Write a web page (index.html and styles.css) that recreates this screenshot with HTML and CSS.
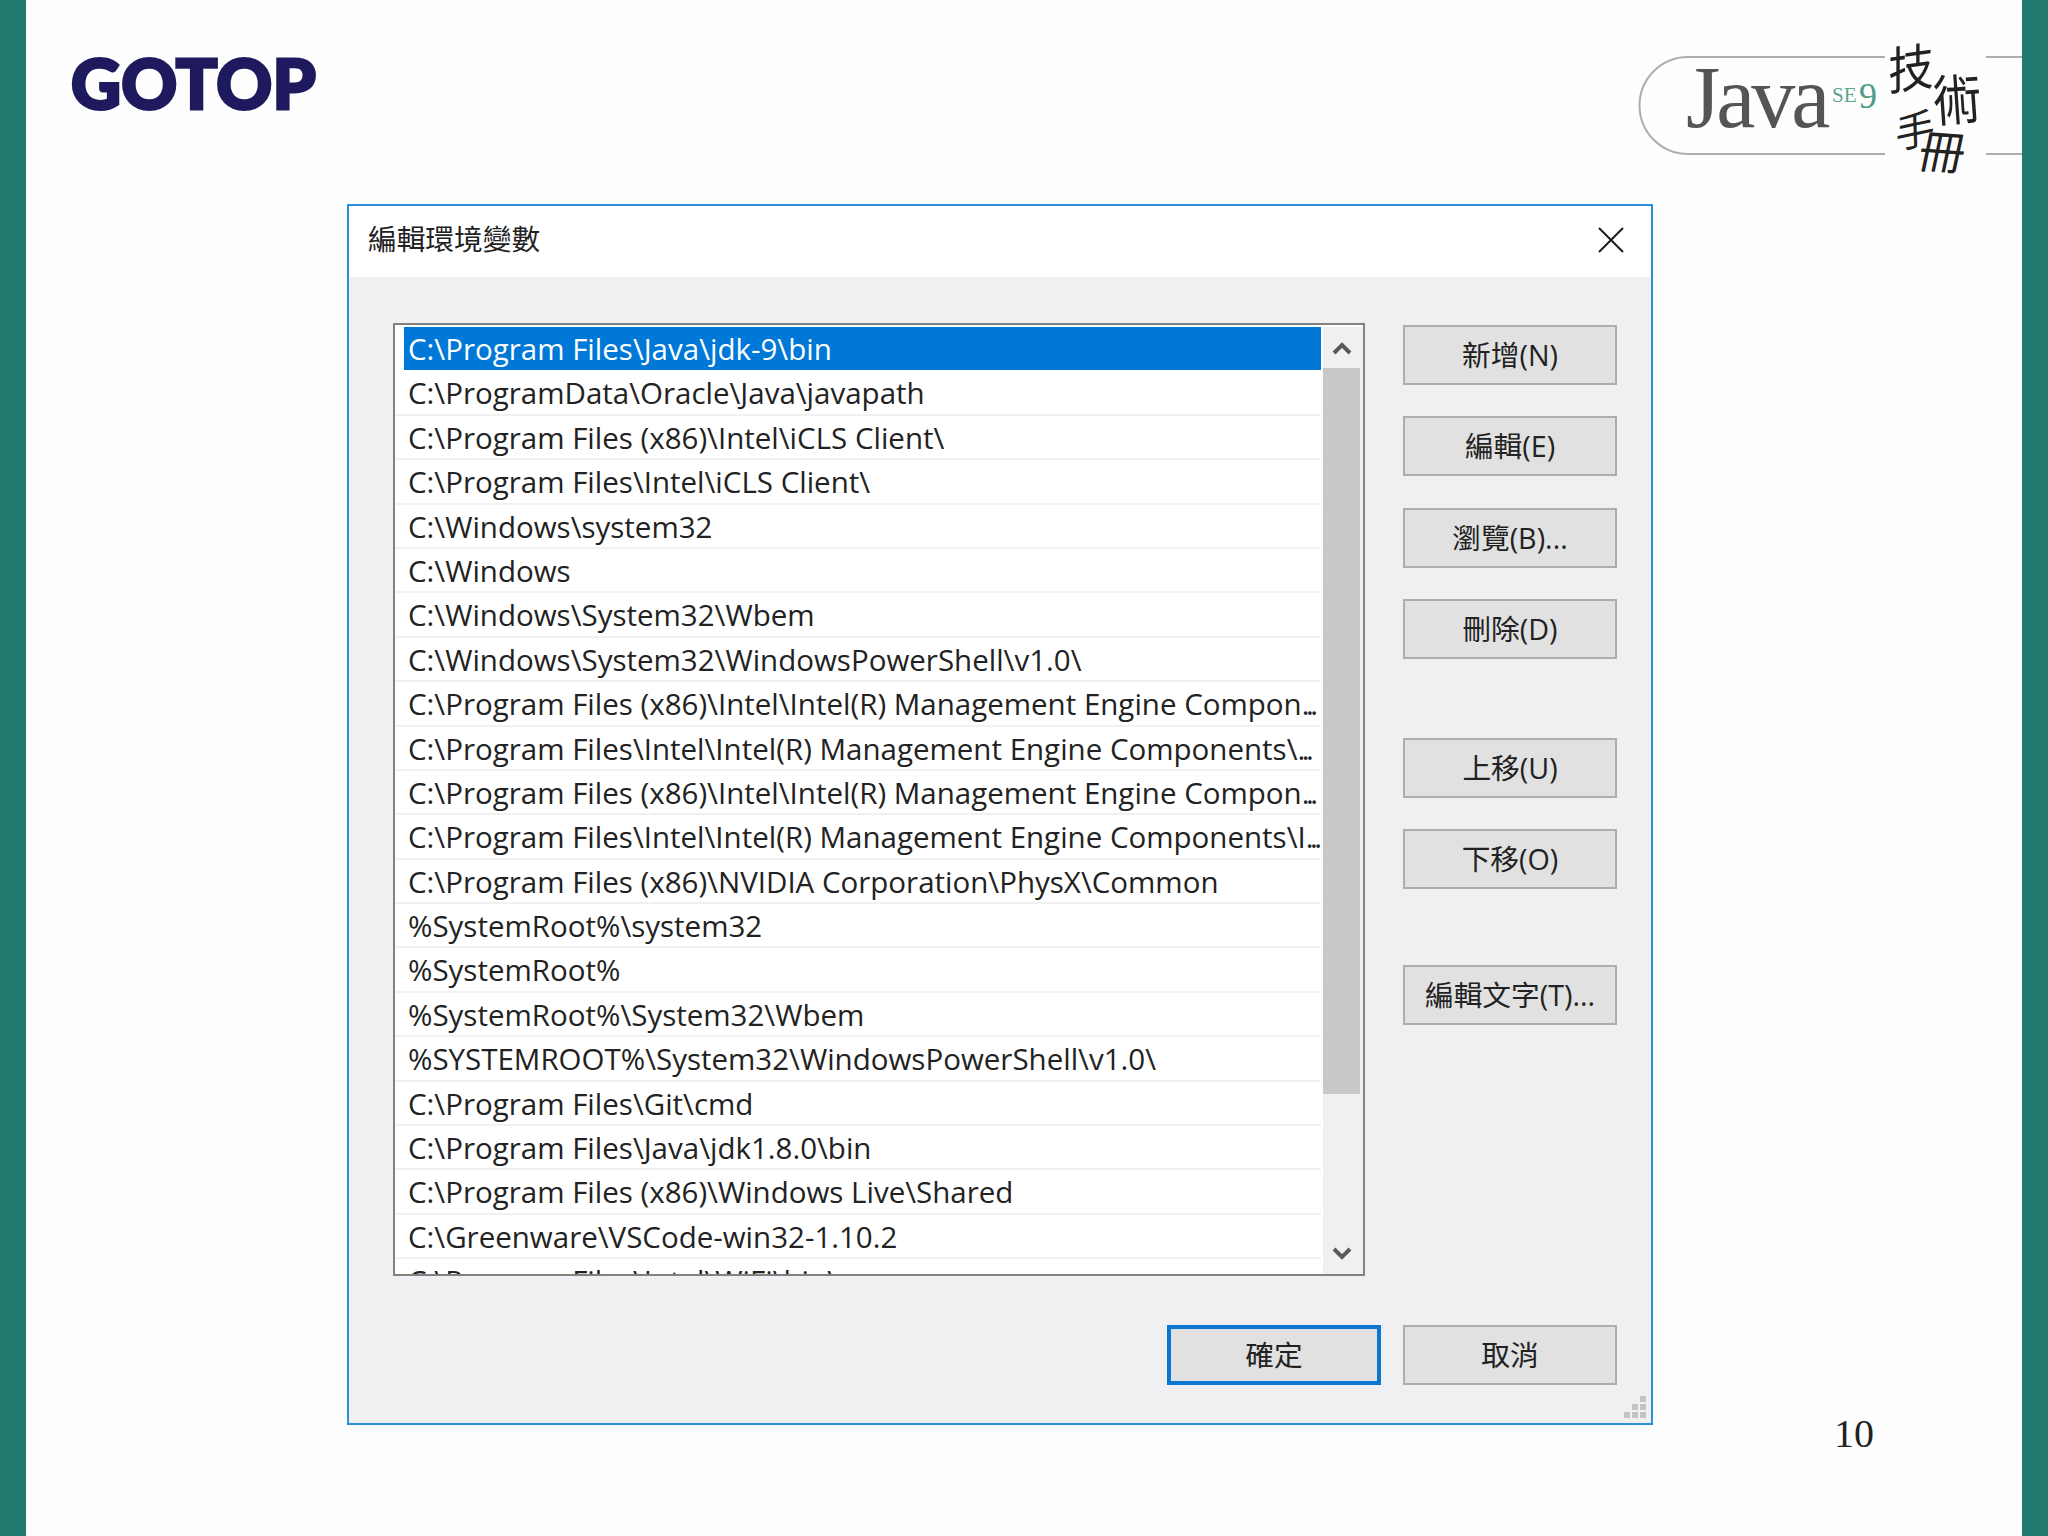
FILE: index.html
```html
<!DOCTYPE html>
<html lang="zh-Hant">
<head>
<meta charset="utf-8">
<title>編輯環境變數</title>
<link rel="stylesheet" href="styles.css">
</head>
<body>
<div class="slide">
  <div class="bar"></div>
  <div class="content">
    <header class="header">
      <div class="gotop">GOTOP</div>
      <div class="java-logo">
        <svg class="pill" width="384" height="100" viewBox="0 0 384 100" aria-hidden="true">
          <path d="M247 1H50A48.500 48.500 0 0 0 50 98H247M348 1H384M348 98H384" fill="none" stroke="#adadad" stroke-width="2"/>
        </svg>
        <span class="java-word">Java</span>
        <span class="java-se">SE</span>
        <span class="java-nine">9</span>
        <span class="hand hand-1">技</span>
        <span class="hand hand-2">術</span>
        <span class="hand hand-3">手</span>
        <span class="hand hand-4">冊</span>
      </div>
    </header>
    <main class="stage">
      <section class="dialog">
        <div class="titlebar">
          <span class="title">編輯環境變數</span>
          <svg class="close" width="26" height="26" viewBox="0 0 26 26" aria-hidden="true">
            <path d="M1 1L25 25M25 1L1 25" stroke="#1a1a1a" stroke-width="2" fill="none"/>
          </svg>
        </div>
        <div class="dialog-body">
          <div class="main-row">
            <div class="listbox">
              <div class="rows">
                <div class="row selected">C:\Program Files\Java\jdk-9\bin</div>
                <div class="row">C:\ProgramData\Oracle\Java\javapath</div>
                <div class="row">C:\Program Files (x86)\Intel\iCLS Client\</div>
                <div class="row">C:\Program Files\Intel\iCLS Client\</div>
                <div class="row">C:\Windows\system32</div>
                <div class="row">C:\Windows</div>
                <div class="row">C:\Windows\System32\Wbem</div>
                <div class="row">C:\Windows\System32\WindowsPowerShell\v1.0\</div>
                <div class="row">C:\Program Files (x86)\Intel\Intel(R) Management Engine Compon<span class="dots">...</span></div>
                <div class="row">C:\Program Files\Intel\Intel(R) Management Engine Components\<span class="dots">...</span></div>
                <div class="row">C:\Program Files (x86)\Intel\Intel(R) Management Engine Compon<span class="dots">...</span></div>
                <div class="row">C:\Program Files\Intel\Intel(R) Management Engine Components\I<span class="dots">...</span></div>
                <div class="row">C:\Program Files (x86)\NVIDIA Corporation\PhysX\Common</div>
                <div class="row">%SystemRoot%\system32</div>
                <div class="row">%SystemRoot%</div>
                <div class="row">%SystemRoot%\System32\Wbem</div>
                <div class="row">%SYSTEMROOT%\System32\WindowsPowerShell\v1.0\</div>
                <div class="row">C:\Program Files\Git\cmd</div>
                <div class="row">C:\Program Files\Java\jdk1.8.0\bin</div>
                <div class="row">C:\Program Files (x86)\Windows Live\Shared</div>
                <div class="row">C:\Greenware\VSCode-win32-1.10.2</div>
                <div class="row">C:\Program Files\Intel\WiFi\bin\</div>
              </div>
              <div class="scrollbar">
                <div class="arrow">
                  <svg width="20" height="14" viewBox="0 0 20 14" aria-hidden="true"><path d="M2 12L10 4L18 12" fill="none" stroke="#5a5a5a" stroke-width="4"/></svg>
                </div>
                <div class="thumb"></div>
                <div class="track"></div>
                <div class="arrow">
                  <svg width="20" height="14" viewBox="0 0 20 14" aria-hidden="true"><path d="M2 2L10 10L18 2" fill="none" stroke="#5a5a5a" stroke-width="4"/></svg>
                </div>
              </div>
            </div>
            <div class="actions">
              <button class="btn">新增(N)</button>
              <button class="btn">編輯(E)</button>
              <button class="btn">瀏覽(B)...</button>
              <button class="btn">刪除(D)</button>
              <button class="btn group-start">上移(U)</button>
              <button class="btn">下移(O)</button>
              <button class="btn group-start-2">編輯文字(T)...</button>
            </div>
          </div>
          <div class="footer">
            <button class="btn default">確定</button>
            <button class="btn">取消</button>
          </div>
          <svg class="grip" width="22" height="22" viewBox="0 0 22 22" aria-hidden="true">
            <path d="M16 0h6v6h-6zM8 8h6v6H8zM16 8h6v6h-6zM0 16h6v6H0zM8 16h6v6H8zM16 16h6v6h-6z" fill="#c4c4c4"/>
          </svg>
        </div>
      </section>
    </main>
    <div class="page-number">10</div>
  </div>
  <div class="bar"></div>
</div>
</body>
</html>
```

FILE: styles.css
```css
* { box-sizing: border-box; }
html, body { margin: 0; padding: 0; background: #fff; }
.slide { display: flex; width: 2048px; height: 1536px; overflow: hidden; background: #fefefe; }
.bar { width: 26px; flex: none; background: #217a6d; }
.content { flex: 1; display: flex; flex-direction: column; min-width: 0; }

.header { height: 204px; flex: none; display: flex; justify-content: space-between; align-items: flex-start; padding-left: 45px; }
.gotop { margin-top: 41px; font: 900 69px/84px Lato, sans-serif; color: #1f1a5e; -webkit-text-stroke: 3px #1f1a5e; letter-spacing: 0.2px; }
.java-logo { position: relative; width: 384px; height: 204px; font-family: "Liberation Serif", serif; }
.pill { position: absolute; left: 0; top: 56px; }
.java-word { position: absolute; left: 48px; top: 48px; font-size: 88px; line-height: 100px; color: #555; letter-spacing: -4px; }
.java-se { position: absolute; left: 194px; top: 83px; font-size: 21px; line-height: 24px; color: #5fa68f; }
.java-nine { position: absolute; left: 221px; top: 78px; font-size: 36px; line-height: 36px; color: #4d9c84; }
.hand { position: absolute; font-family: "Noto Sans CJK TC", sans-serif; font-weight: 400; color: #222; line-height: 1; }
.hand-1 { left: 250px; top: 42px; font-size: 46px; transform: rotate(-8deg) skewX(-8deg) scaleY(1.1); }
.hand-2 { left: 295px; top: 72px; font-size: 48px; transform: rotate(-4deg) scaleY(1.15); }
.hand-3 { left: 257px; top: 108px; font-size: 40px; transform: rotate(-12deg) skewX(-10deg); }
.hand-4 { left: 282px; top: 126px; font-size: 46px; transform: rotate(4deg) skewX(-8deg); }

.stage { flex: none; padding-left: 321px; }
.dialog { width: 1306px; height: 1221px; display: flex; flex-direction: column; border: 2px solid #2a8fd8; background: #f0f0f2; font-family: "Open Sans", "Noto Sans CJK TC", sans-serif; color: #222; }
.titlebar { height: 71px; flex: none; display: flex; align-items: center; justify-content: space-between; padding: 0 27px 4px 19px; background: #fff; }
.title { margin-bottom: 4px; font: 28.7px/40px "Noto Sans CJK TC", sans-serif; color: #222; }
.dialog-body { flex: 1; position: relative; display: flex; flex-direction: column; padding: 46px 34px 0 44px; }
.main-row { display: flex; gap: 38px; align-items: flex-start; }

.listbox { width: 972px; height: 953px; flex: none; display: flex; border: 2px solid #828282; background: #fff; overflow: hidden; }
.rows { width: 926px; flex: none; padding-top: 2px; overflow: hidden; }
.row { height: 44.4px; line-height: 43px; padding-left: 13px; font-size: 29.5px; white-space: nowrap; overflow: hidden; border-bottom: 2px solid #f1f1f1; color: #222; }
.row.selected { margin-left: 9px; padding-left: 4px; background: #0078d7; color: #fff; height: 43px; margin-bottom: 1.4px; border-bottom: 0; }
.dots { letter-spacing: -3.5px; }
.scrollbar { width: 40px; flex: none; margin-left: 2px; padding-right: 3px; display: flex; flex-direction: column; background: #f0f0f0; margin-top: 2px; }
.arrow { height: 41px; flex: none; display: flex; align-items: center; justify-content: center; }
.thumb { height: 726px; flex: none; background: #c8c8c8; }
.track { flex: 1; }

.actions { width: 214px; flex: none; display: flex; flex-direction: column; gap: 31.4px; padding-top: 2px; }
.btn { display: flex; align-items: center; justify-content: center; width: 214px; height: 60px; padding: 0; border: 2px solid #adadad; background: #e1e1e1; font: 28.7px/40px "Open Sans", "Noto Sans CJK TC", sans-serif; color: #222; }
.group-start { margin-top: 47px; }
.group-start-2 { margin-top: 45px; }
.footer { display: flex; justify-content: flex-end; gap: 22px; margin-top: 49px; }
.btn.default { border: 4px solid #0a78d0; }
.grip { position: absolute; right: 5px; bottom: 5px; }

.page-number { margin-top: -14px; padding-right: 148px; text-align: right; font: 40px/46px "Liberation Serif", serif; color: #222; }
```
